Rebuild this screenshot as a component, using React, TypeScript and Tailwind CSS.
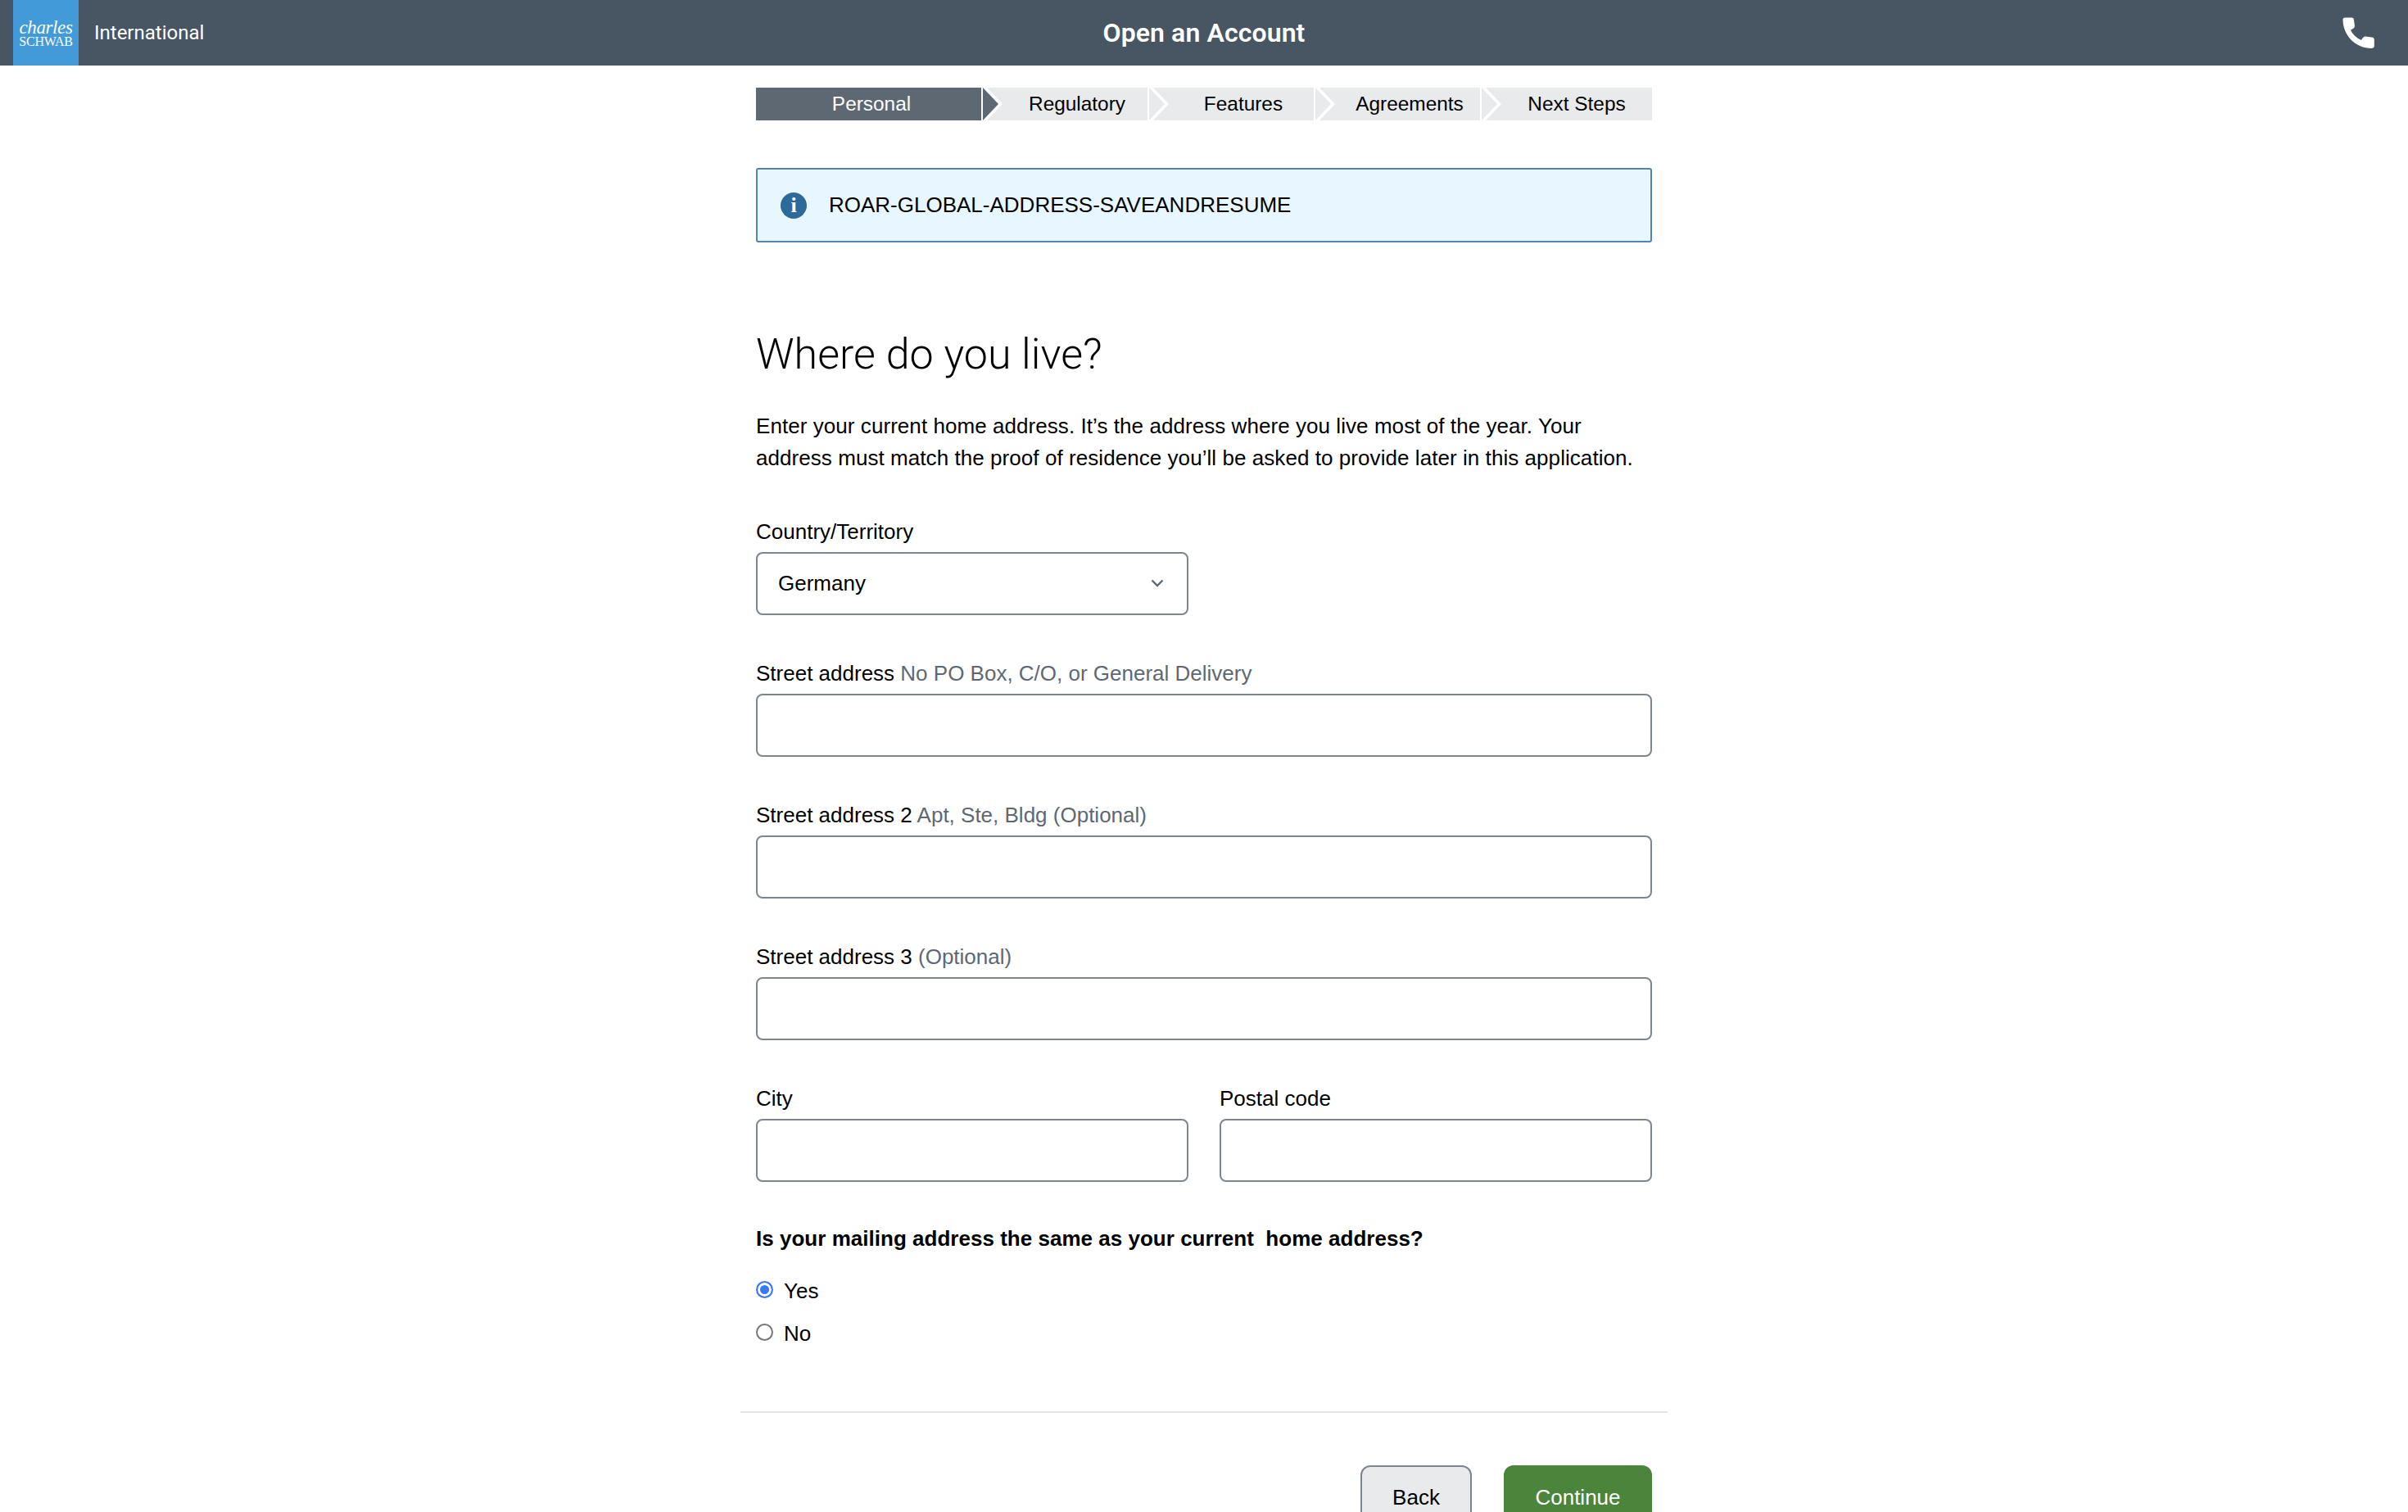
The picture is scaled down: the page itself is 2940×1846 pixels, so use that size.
import React from "react";

const sans = "font-['Liberation_Sans',Arial,sans-serif]";

function Chevron({ active }: { active?: boolean }) {
  return (
    <svg className="absolute left-0 top-0 h-full w-[27px]" viewBox="0 0 27 40" preserveAspectRatio="none">
      <path d="M0 0 H7 L26 20 L7 40 H0 Z" fill="#ffffff" />
      <path d="M2 0 L21 20 L2 40 Z" fill={active ? "#5e6873" : "#e9eaec"} />
    </svg>
  );
}

function Step({ label, first, activePrev, last }: { label: string; first?: boolean; activePrev?: boolean; last?: boolean }) {
  if (first) {
    return (
      <div className="flex h-full w-[275px] items-center justify-center bg-[#5e6873] pl-[7px] text-white">
        {label}
      </div>
    );
  }
  return (
    <div className={`relative flex h-full items-center justify-center bg-[#e9eaec] ${last ? "w-[210px] pl-[26px]" : "w-[203px] pl-[31px]"}`}>
      <Chevron active={activePrev} />
      <span>{label}</span>
    </div>
  );
}

function Field({ label, hint, half }: { label: string; hint?: string; half?: boolean }) {
  return (
    <div className={`flex flex-col ${half ? "w-[528px]" : "w-full"}`}>
      <label className="mb-[10px] h-[30px] leading-[30px]">
        {label}
        {hint ? <span className="text-[#5e6873]"> {hint}</span> : null}
      </label>
      <input className="h-[77px] w-full rounded-[8px] border-2 border-[#7d858f] bg-white outline-none" />
    </div>
  );
}

function Radio({ label, checked }: { label: string; checked?: boolean }) {
  return (
    <label className="flex h-[30px] items-center gap-[13px]">
      <input
        type="radio"
        name="same"
        defaultChecked={checked}
        className="h-[21px] w-[21px] -translate-y-[2px] appearance-none rounded-full border-2 border-[#767676] bg-white checked:border-[#3b78f6] checked:bg-[#3b78f6] checked:shadow-[inset_0_0_0_3px_#ffffff]"
      />
      {label}
    </label>
  );
}

export default function App() {
  return (
    <div className={`h-[1846px] w-full overflow-hidden bg-white text-[26px] text-black ${sans}`}>
      <header className="relative flex h-[80px] items-center bg-[#485563] pl-[16px] pr-[41px] text-white">
        <div className="flex h-full w-[80px] flex-col items-center justify-center bg-[#429bd8] pt-[1px] font-['Liberation_Serif',serif]">
          <span className="text-[23px] italic leading-[20px] tracking-[-0.4px]">charles</span>
          <span className="text-[16px] leading-[14px] tracking-[-0.2px]">SCHWAB</span>
        </div>
        <span className="ml-[19px] font-['Roboto',sans-serif] text-[24px]">International</span>
        <h1 className="pointer-events-none absolute inset-x-0 text-center font-['Roboto',sans-serif] text-[32px] font-semibold tracking-[0.1px]">Open an Account</h1>
        <svg className="ml-auto h-[38px] w-[39px]" viewBox="0 0 39 38" fill="#ffffff">
          <path d="M3 0.5 H11 C13 0.5 14 1.5 14 3.5 L15 11 C15 13 13 14 10 15.5 C12 21 18 26 23 28 C24.5 25 26 23.5 28 23.5 L36 24.5 C38 24.5 38.8 26 38.8 28 V35 C38.8 37 37.5 38 35.5 38 C16 38 0.5 22 0.5 3 C0.5 1.5 1.5 0.5 3 0.5 Z" />
        </svg>
      </header>

      <main className="mx-auto flex w-[1094px] flex-col">
        <nav className="mt-[27px] flex h-[40px] items-center text-[24.4px]">
          <Step label="Personal" first />
          <Step label="Regulatory" activePrev />
          <Step label="Features" />
          <Step label="Agreements" />
          <Step label="Next Steps" last />
        </nav>

        <div className="mt-[58px] flex h-[91px] items-center rounded-[3px] border-2 border-[#4f85ad] bg-[#e8f7ff] pl-[28px]">
          <span className="flex h-[32px] w-[32px] items-center justify-center rounded-full bg-[#2d6a9a] font-['Liberation_Serif',serif] text-[26px] font-bold leading-none text-white">i</span>
          <span className="ml-[27px]">ROAR-GLOBAL-ADDRESS-SAVEANDRESUME</span>
        </div>

        <h2 className="mt-[103px] font-['Roboto',sans-serif] text-[52px] font-light leading-[68px]">Where do you live?</h2>

        <p className="mt-[34px] leading-[39.4px] tracking-[0.06px]">
          Enter your current home address. It’s the address where you live most of the year. Your
          <br />
          address must match the proof of residence you’ll be asked to provide later in this application.
        </p>

        <div className="mt-[54px] flex flex-col gap-[56px]">
          <div className="flex w-[528px] flex-col">
            <label className="mb-[10px] h-[30px] leading-[30px]">Country/Territory</label>
            <div className="flex h-[77px] items-center justify-between rounded-[8px] border-2 border-[#7d858f] pl-[25px] pr-[28px]">
              <span>Germany</span>
              <svg className="h-[10px] w-[16px]" viewBox="0 0 16 10" fill="none" stroke="#5e6873" strokeWidth="2.4">
                <path d="M1.5 1.5 L8 8 L14.5 1.5" />
              </svg>
            </div>
          </div>
          <Field label="Street address" hint="No PO Box, C/O, or General Delivery" />
          <Field label="Street address 2" hint="Apt, Ste, Bldg (Optional)" />
          <Field label="Street address 3" hint="(Optional)" />
          <div className="flex justify-between">
            <Field label="City" half />
            <Field label="Postal code" half />
          </div>
        </div>

        <p className="mt-[53px] h-[32px] font-bold leading-[32px] tracking-[0.02px]">Is your mailing address the same as your current&nbsp; home address?</p>

        <div className="mt-[34px] flex flex-col gap-[22px]">
          <Radio label="Yes" checked />
          <Radio label="No" />
        </div>

        <hr className="-mx-[19px] mt-[79px] border-t-2 border-[#e3e4e6]" />

        <div className="mt-[64px] flex justify-end gap-[39px]">
          <button className="h-[80px] w-[136px] rounded-[12px] border-2 border-[#7d858f] bg-[#e9eaec]">Back</button>
          <button className="h-[80px] w-[181px] rounded-[12px] bg-[#4a853b] text-white">Continue</button>
        </div>
      </main>
    </div>
  );
}
